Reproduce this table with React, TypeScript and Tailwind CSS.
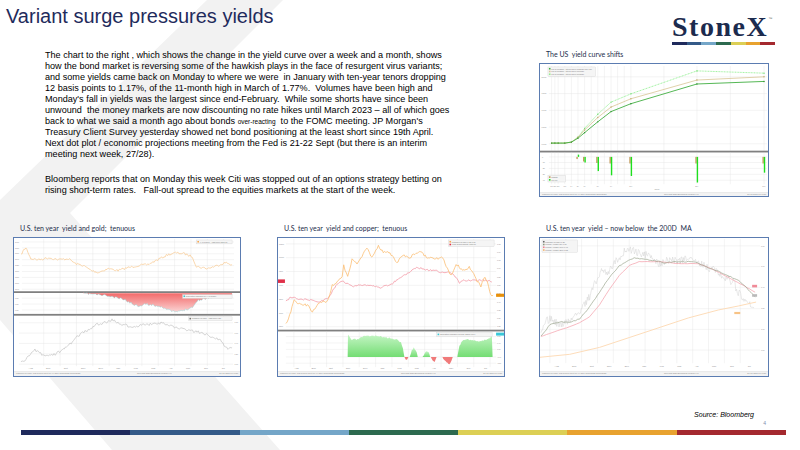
import React from "react";

type P = [number, number];

const BAR = [
  "bg-[#1f2a5c]",
  "bg-[#345a88]",
  "bg-[#74a6c8]",
  "bg-[#2d6a4f]",
  "bg-[#dccf55]",
  "bg-[#e8a22f]",
  "bg-[#a4292f]",
];

function rng(seed: number) {
  let s = seed;
  return () => {
    s = (s * 16807) % 2147483647;
    return (s - 1) / 2147483646;
  };
}

// interpolate between key points and add a bit of noise so it looks like market data
function walk(keys: P[], step: number, amp: number, seed: number): P[] {
  const r = rng(seed);
  const out: P[] = [];
  for (let i = 0; i < keys.length - 1; i++) {
    const [x0, y0] = keys[i];
    const [x1, y1] = keys[i + 1];
    const n = Math.max(1, Math.round((x1 - x0) / step));
    for (let j = 0; j < n; j++) {
      const t = j / n;
      out.push([x0 + (x1 - x0) * t, y0 + (y1 - y0) * t + (r() - 0.5) * amp]);
    }
  }
  out.push(keys[keys.length - 1]);
  return out;
}

const line = (p: P[]) => "M" + p.map(([x, y]) => `${x.toFixed(1)} ${y.toFixed(1)}`).join("L");
const area = (p: P[], base: number) =>
  line(p) + `L${p[p.length - 1][0]} ${base}L${p[0][0]} ${base}Z`;
const range = (a: number, b: number, s: number) =>
  Array.from({ length: Math.floor((b - a) / s) + 1 }, (_, i) => a + i * s);

function Tiny({ x, y, t, anchor = "start", fill = "#8a8a8a", size = 2.4 }: {
  x: number; y: number; t: string; anchor?: "start" | "end" | "middle"; fill?: string; size?: number;
}) {
  return (
    <text x={x} y={y} fontSize={size} fill={fill} textAnchor={anchor} fontFamily="Liberation Sans, sans-serif">
      {t}
    </text>
  );
}

function Grid({ xs, ys, x0, x1, y0, y1 }: { xs: number[]; ys: number[]; x0: number; x1: number; y0: number; y1: number }) {
  return (
    <g stroke="#e3e3e3" strokeWidth={0.4}>
      {xs.map((x) => <line key={"v" + x} x1={x} x2={x} y1={y0} y2={y1} />)}
      {ys.map((y) => <line key={"h" + y} x1={x0} x2={x1} y1={y} y2={y} />)}
    </g>
  );
}

const MONTHS = ["Aug", "Sep", "Oct", "Nov", "Dec", "Jan", "Feb", "Mar", "Apr", "May", "Jun", "Jul"];

function XAxis({ x0, x1, y }: { x0: number; x1: number; y: number }) {
  const step = (x1 - x0) / MONTHS.length;
  return (
    <g>
      {MONTHS.map((m, i) => (
        <Tiny key={m} x={x0 + step * (i + 0.5)} y={y} t={m} anchor="middle" />
      ))}
    </g>
  );
}

function Foot({ w, y }: { w: number; y: number }) {
  return (
    <g>
      <rect x={0} y={y} width={w} height={140} fill="#f3f3f3" />
      <line x1={0} x2={w} y1={y} y2={y} stroke="#cfcfcf" strokeWidth={0.4} />
      <Tiny x={2} y={y + 2.8} t="USGG10YR Index (US Generic Govt 10 Yr) Daily 20JUL2020-20JUL2021" size={2} />
      <Tiny x={w / 2 + 10} y={y + 2.8} t="Copyright 2021 Bloomberg Finance L.P." size={2} />
      <Tiny x={w - 2} y={y + 2.8} t="20-Jul-2021 10:40:38" anchor="end" size={2} />
    </g>
  );
}

function Legend({ x, y, w, rows }: { x: number; y: number; w: number; rows: { c: string; t: string }[] }) {
  return (
    <g>
      <rect x={x} y={y} width={w} height={rows.length * 2.8 + 1.2} fill="#f5f5f5" stroke="#c8c8c8" strokeWidth={0.3} />
      {rows.map((r, i) => (
        <g key={i}>
          <rect x={x + 1} y={y + 1 + i * 2.8} width={1.6} height={1.6} fill={r.c} />
          <Tiny x={x + 3.4} y={y + 2.6 + i * 2.8} t={r.t} size={1.9} fill="#777" />
        </g>
      ))}
    </g>
  );
}

function Sep({ y, w }: { y: number; w: number }) {
  return <rect x={0} y={y} width={w} height={1.8} fill="#808080" />;
}

function YieldCurveChart() {
  const xs = [11.7, 15, 18.3, 25, 31.7, 38.3, 45, 58.3, 71.7, 91.7, 158.3, 226];
  const dark = [80.3, 80.3, 80.3, 80.3, 79.3, 75.3, 69.7, 58.7, 48.3, 40.3, 20.3, 17.7];
  const tan = [80.3, 80.3, 80.3, 80.3, 79.3, 74.3, 67, 54.3, 43.7, 35.3, 16.3, 13];
  const light = [80.3, 80.3, 80.3, 80.3, 79.3, 74.3, 65.3, 51, 38.7, 30.3, 7, 9.3];
  const pts = (ys: number[]) => xs.map((x, i) => `${x},${ys[i]}`).join(" ");
  const bars: [number, number, number][] = [
    [38.3, 96.5, 92], [45, 99, 100], [58.3, 100.5, 108.7],
    [71.7, 101, 113], [91.7, 101, 113.7], [158.3, 101, 120.3], [226, 101, 110.3],
  ];
  const labels = ["1M", "2M", "3M", "6M", "1Y", "2Y", "3Y", "5Y", "7Y", "10Y", "20Y", "30Y"];
  const vgrid = [11.7, 15, 18.3, 25, 31.7, 38.3, 45, 51.7, 58.3, 65, 71.7, 78.3, 85, 91.7, 125, 158.3, 192, 226];
  return (
    <svg viewBox="0 0 230 134" preserveAspectRatio="none" className="block w-full h-full">
      <Grid xs={vgrid} ys={[13, 30, 47, 64, 81]} x0={9} x1={229} y0={2} y1={88} />
      {["2.000", "1.500", "1.000", "0.500", "0.000"].map((t, i) => (
        <Tiny key={t} x={1.5} y={[13, 30, 47, 64, 81][i] + 0.8} t={t} size={2} />
      ))}
      <Legend x={8} y={3} w={48} rows={[
        { c: "#3fae3f", t: "US 10 Treasury Actives Curve 07/20/21 Mid YTM" },
        { c: "#d8c79b", t: "US 10 Treasury Actives Curve 07/13/21" },
        { c: "#8ff08f", t: "US 10 Treasury Actives Curve 06/18/21" },
      ]} />
      <polyline points={pts(light)} fill="none" stroke="#86ee86" strokeWidth={0.8} strokeDasharray="1 0.6" />
      <polyline points={pts(tan)} fill="none" stroke="#d8c595" strokeWidth={0.8} />
      <polyline points={pts(dark)} fill="none" stroke="#3fae3f" strokeWidth={0.9} />
      {xs.map((x, i) => (
        <g key={x}>
          <circle cx={x} cy={light[i]} r={0.7} fill="#6fdc6f" />
          <circle cx={x} cy={tan[i]} r={0.7} fill="#c2ab6f" />
          <circle cx={x} cy={dark[i]} r={0.7} fill="#2a8f2a" />
        </g>
      ))}
      <Sep y={88} w={230} />
      <Grid xs={vgrid} ys={[94.3, 100, 106, 112, 118]} x0={9} x1={229} y0={90} y1={122} />
      {["0", "-10", "-20", "-30", "-40"].map((t, i) => (
        <Tiny key={t} x={2} y={[94.3, 100, 106, 112, 118][i] + 0.8} t={t} size={2} />
      ))}
      {bars.map(([x, t, g]) => (
        <g key={x}>
          <rect x={x - 1.6} y={Math.min(94.3, t)} width={1.4} height={Math.abs(t - 94.3)} fill="#c29b5c" />
          <rect x={x - 0.2} y={Math.min(94.3, g)} width={1.4} height={Math.abs(g - 94.3)} fill="#1ee01e" />
        </g>
      ))}
      <Legend x={8} y={113} w={18} rows={[{ c: "#c29b5c", t: "Change" }, { c: "#1ee01e", t: "1W 1M" }]} />
      {xs.map((x, i) => <Tiny key={"l" + x} x={x} y={125} t={labels[i]} anchor="middle" size={1.9} />)}
      <Tiny x={118} y={128.3} t="Tenor" anchor="middle" size={2} />
      <Foot w={230} y={130.5} />
    </svg>
  );
}

function GoldChart() {
  const gold = walk([[7, 17], [10, 12], [12, 10], [14, 14], [17, 21], [25, 22], [35, 20], [45, 22], [55, 21], [62, 26], [70, 28], [78, 33], [85, 35], [95, 31], [105, 33], [115, 30], [125, 28], [135, 27], [145, 22], [155, 17], [163, 15], [172, 16], [180, 19], [184, 29], [195, 31], [205, 28], [213, 25], [220, 27]], 1.2, 2.2, 7);
  const spread = walk([[70, 56], [80, 57], [90, 58], [100, 60], [110, 62], [118, 66], [125, 69], [132, 67], [140, 68], [150, 70], [158, 74], [165, 75], [172, 73], [180, 70], [186, 63], [195, 61], [205, 59], [213, 60], [220, 58]], 1.2, 2, 11);
  const yld = walk([[7, 127], [12, 124], [20, 113], [28, 118], [37, 120], [45, 116], [53, 110], [60, 104], [67, 97], [75, 93], [83, 88], [92, 86], [100, 83], [110, 88], [120, 91], [130, 88], [140, 87], [147, 86], [157, 89], [167, 91], [180, 94], [193, 97], [200, 100], [207, 103], [212, 109], [217, 113], [220, 111]], 1.2, 3, 23);
  const vx = range(30, 215, 16.5);
  const redArea = "M70 56" + spread.map(([x, y]) => `L${x.toFixed(1)} ${y.toFixed(1)}`).join("") + "L220 56Z";
  return (
    <svg viewBox="0 0 228 140" preserveAspectRatio="none" className="block w-full h-full">
      <defs>
        <linearGradient id="gRed" x1="0" y1="0" x2="0" y2="1">
          <stop offset="0" stopColor="#f26464" />
          <stop offset="1" stopColor="#fbd3d3" />
        </linearGradient>
      </defs>
      <Grid xs={vx} ys={range(4, 52, 6)} x0={8} x1={222} y0={1} y1={54} />
      {range(4, 52, 6).map((y, i) => <Tiny key={y} x={1} y={y + 0.7} t={`${1900 - i * 20}`} size={1.8} />)}
      <Legend x={184} y={2} w={36} rows={[{ c: "#f6a54e", t: "XAU Curncy - Last Price 1813.00" }]} />
      <path d={line(gold)} fill="none" stroke="#f9cd9a" strokeWidth={0.8} />
      <Sep y={54} w={228} />
      <Grid xs={vx} ys={[61, 67, 73]} x0={8} x1={222} y0={56} y1={77} />
      {[61, 67, 73].map((y) => <Tiny key={y} x={1} y={y + 0.7} t="0.50" size={1.8} />)}
      <path d={redArea} fill="url(#gRed)" />
      <path d={line(spread)} fill="none" stroke="#7fd0d4" strokeWidth={0.4} />
      <Legend x={170} y={57.3} w={50} rows={[{ c: "#39c6d4", t: "Correlation USGG10YR XAU Curncy" }]} />
      <Sep y={77} w={228} />
      <Grid xs={vx} ys={range(86, 128, 10.5)} x0={5} x1={221} y0={79} y1={130} />
      {range(86, 128, 10.5).map((y, i) => <Tiny key={y} x={222.5} y={y + 0.7} t={`${(1.8 - i * 0.2).toFixed(2)}`} size={1.8} />)}
      <Legend x={176} y={80} w={44} rows={[{ c: "#777", t: "USGG10YR Index - Last Price 1.20" }]} />
      <path d={line(yld)} fill="none" stroke="#c2c2c2" strokeWidth={0.7} />
      <XAxis x0={8} x1={220} y={132.6} />
      <Foot w={228} y={135.5} />
    </svg>
  );
}

function CopperChart() {
  const orange = walk([[8, 88], [13, 74.7], [16.3, 63], [23, 68], [29.7, 68], [34.7, 74.7], [43, 64.7], [49.7, 64.7], [54.7, 48], [59.7, 44.7], [64.7, 39.7], [66.3, 28], [70.3, 39.7], [74.7, 21.3], [79.7, 26.3], [89.7, 9.7], [94.7, 19.7], [101.3, 8], [106.3, 14.7], [113, 14.7], [119.7, 24.7], [126.3, 18], [133, 19.7], [143, 13], [149.7, 19.7], [156.3, 21.3], [166.3, 19.7], [169.7, 28], [174.7, 38], [179.7, 26.3], [186.3, 33], [193, 29.7], [199.7, 41.3], [204.7, 49.7], [208, 39.7], [211.3, 44.7], [214.7, 58], [217, 58]], 1.2, 2.6, 5);
  const pink = walk([[8, 64.7], [13, 59.7], [19.7, 62], [33, 63], [43, 64.7], [51.3, 59.7], [59.7, 46.3], [64.7, 43], [69.7, 46.3], [76.3, 49.7], [83, 47.3], [93, 48], [103, 50.3], [113, 47.3], [119.7, 43], [126.3, 38], [133, 34.7], [139.7, 29.7], [146.3, 31.3], [153, 33], [159.7, 33], [166.3, 35.3], [173, 34.7], [179.7, 39.7], [183, 46.3], [186.3, 43], [196.3, 43], [206.3, 43], [213, 43], [215.7, 44.7]], 1.2, 1.8, 9);
  const base = 120.7;
  const g1 = walk([[70.3, base], [70.6, 98], [74, 103], [80, 103], [86, 100], [95, 99], [105, 100], [115, 102], [120, 103], [124, 106], [126, 112], [127.5, base]], 1, 1.5, 3);
  const g2 = walk([[133, base], [135, 114], [137, 111.3], [140, 116], [141, base]], 1, 1, 4);
  const g3 = walk([[146, base], [149, 115], [152, 116], [153.5, base]], 1, 1, 6);
  const g4 = walk([[181, base], [183, 110], [186, 104], [190, 103], [196, 104], [202, 105], [207, 104], [211, 103], [214, 102], [215.7, 97], [216.5, base]], 1, 1.5, 8);
  const r1 = walk([[127.5, base], [129, 123.7], [130.5, 123], [131.5, base]], 1, 0.5, 12);
  const r2 = walk([[154, base], [156, 124], [158, 125.3], [160, base]], 1, 1, 13);
  const r3 = walk([[165.7, base], [168, 124], [171, 127], [173, 128], [175, 125], [176.3, base]], 1, 1, 14);
  const vx = range(16, 216, 16.5);
  return (
    <svg viewBox="0 0 228 140" preserveAspectRatio="none" className="block w-full h-full">
      <defs>
        <linearGradient id="gGreen" x1="0" y1="0" x2="0" y2="1">
          <stop offset="0" stopColor="#c4f5c4" />
          <stop offset="1" stopColor="#74dd74" />
        </linearGradient>
      </defs>
      <Grid xs={vx} ys={range(6, 90, 14)} x0={8} x1={220} y0={1} y1={93} />
      {range(6, 90, 14).map((y, i) => <Tiny key={y} x={1} y={y + 0.7} t={`${10500 - i * 500}`} size={1.8} />)}
      {range(6, 90, 8.4).map((y, i) => <Tiny key={y} x={221} y={y + 0.7} t={`${(1.75 - i * 0.05).toFixed(2)}`} size={1.8} />)}
      <Legend x={172} y={2} w={46} rows={[
        { c: "#f6a54e", t: "USGG10YR Index  1.20  1.18" },
        { c: "#e4304c", t: "LMCADS03 Comdty  9379.00" },
      ]} />
      <path d={line(pink)} fill="none" stroke="#f39aa6" strokeWidth={0.8} />
      <path d={line(orange)} fill="none" stroke="#fbbd72" strokeWidth={0.8} />
      <rect x={0} y={42} width={7} height={3.6} fill="#e0304a" />
      <rect x={220} y={56.5} width={8} height={3.2} fill="#e8900a" />
      <Sep y={93} w={228} />
      <Grid xs={vx} ys={[100, 106.5, 113, 120.7, 127]} x0={8} x1={220} y0={95} y1={131} />
      {[100, 106.5, 113, 120.7, 127].map((y, i) => <Tiny key={y} x={221} y={y + 0.7} t={`${(0.8 - i * 0.4).toFixed(2)}`} size={1.8} />)}
      {[g1, g2, g3, g4].map((g, i) => <path key={i} d={area(g, base)} fill="url(#gGreen)" />)}
      {[r1, r2, r3].map((g, i) => <path key={"r" + i} d={area(g, base)} fill="#f07a7a" />)}
      <rect x={220} y={96} width={8} height={3} fill="#38c8d8" />
      <Legend x={160} y={96} w={56} rows={[{ c: "#38c8d8", t: "Correlation USGG10YR LMCADS03 0.844" }]} />
      <XAxis x0={10} x1={218} y={133.2} />
      <Foot w={228} y={135.5} />
    </svg>
  );
}

function MaChart() {
  const price = walk([[1, 100], [5, 85], [10, 82], [20, 88], [30, 84], [40, 75], [50, 60], [55, 45], [60, 40], [62, 30], [68, 35], [75, 25], [80, 20], [85, 14], [92, 12], [100, 16], [110, 18], [120, 26], [130, 22], [140, 24], [150, 20], [160, 24], [170, 30], [180, 35], [190, 42], [195, 45], [200, 55], [205, 60], [210, 65], [214, 73], [216, 70]], 0.8, 8, 31);
  const ma50 = walk([[1, 100], [10, 88], [20, 85], [30, 86], [40, 82], [50, 70], [60, 55], [70, 40], [80, 28], [95, 20], [110, 22], [125, 25], [140, 24], [155, 24], [170, 30], [185, 36], [200, 43], [210, 52], [217, 60]], 2, 1, 2);
  const ma100 = walk([[1, 100], [15, 95], [30, 90], [40, 86], [50, 80], [60, 68], [70, 52], [80, 38], [90, 28], [100, 24], [120, 24], [140, 26], [160, 26], [175, 32], [190, 40], [205, 48], [217, 55]], 3, 0.3, 3);
  const ma200: P[] = [[0, 121], [30, 118], [60, 111], [90, 101], [120, 91], [150, 81], [180, 73], [200, 69], [218, 65]];
  const hy = [8, 29, 50, 71.7, 92.7, 113.7];
  return (
    <svg viewBox="0 0 230 140" preserveAspectRatio="none" className="block w-full h-full">
      <Grid xs={range(10, 215, 16)} ys={hy} x0={0} x1={222} y0={1} y1={127} />
      {hy.map((y, i) => <Tiny key={y} x={223} y={y + 0.7} t={`${(1.8 - i * 0.2).toFixed(2)}`} size={1.8} />)}
      <Legend x={2} y={2} w={36} rows={[
        { c: "#666", t: "USGG10YR Index  1.20" },
        { c: "#8e9a80", t: "Moving Average (50) 1.39" },
        { c: "#f08090", t: "Moving Average (100) 1.48" },
        { c: "#f6b46a", t: "Moving Average (200) 1.22" },
      ]} />
      <path d={line(price)} fill="none" stroke="#d2d2d2" strokeWidth={0.5} />
      <path d={line(ma200)} fill="none" stroke="#fddcb8" strokeWidth={1} />
      <path d={line(ma100)} fill="none" stroke="#f5a8b1" strokeWidth={0.8} />
      <path d={line(ma50)} fill="none" stroke="#9ba58e" strokeWidth={0.7} />
      <rect x={214} y={47.5} width={5} height={2.6} fill="#f08a98" />
      <rect x={214} y={57} width={5} height={2.6} fill="#b9b9b9" />
      <rect x={196} y={75} width={6} height={2.2} fill="#f7c386" />
      <XAxis x0={8} x1={220} y={131} />
      <Foot w={230} y={135.5} />
    </svg>
  );
}

function ChartCard({ title, w, h, children, cls = "" }: { title: string; w: string; h: string; children: React.ReactNode; cls?: string }) {
  return (
    <div className={`${w} ${cls} flex flex-col`}>
      <div className="h-[17px] flex items-center pl-[7px] font-['Lato'] text-[7px] text-[#232d4b] whitespace-pre">{title}</div>
      <div className={`${h} border-[1.5px] border-[#5b7cb1] bg-white overflow-hidden`}>{children}</div>
    </div>
  );
}

export default function App() {
  return (
    <div className="relative w-[800px] h-[450px] overflow-hidden bg-white font-['Liberation_Sans',Arial,sans-serif]">
      <svg className="absolute inset-0" width="800" height="450" viewBox="0 0 800 450">
        <polygon points="207,0 283,0 70,213 280,450 112,450 0,320 0,200" fill="#f2f2f2" />
      </svg>

      <div className="relative flex flex-col h-full">
        <header className="h-[46px] flex justify-between items-start">
          <h1 className="pl-[6px] pt-[3px] text-[20px] leading-[26px] text-[#1f2b5c] whitespace-pre">Variant surge pressures yields</h1>
          <div className="pt-[13px] pr-[25px] flex flex-col items-start">
            <div className="flex items-start">
              <span className="font-['Liberation_Serif',serif] font-bold text-[28px] leading-none tracking-[1.5px] text-[#1c2b4e]">StoneX</span>
              <span className="text-[4px] leading-none mt-[4px] text-[#666]">™</span>
            </div>
            <div className="flex w-[103px] h-[3px] mt-[1px]">
              {BAR.map((c) => <div key={c} className={`flex-1 ${c}`} />)}
            </div>
          </div>
        </header>

        <section className="flex h-[151px]">
          <div className="ml-[45px] mt-[4px] text-[9.1px] leading-[11px] text-black whitespace-pre">
            <p>
              The chart to the right , which shows the change in the yield curve over a week and a month, shows{"\n"}
              how the bond market is reversing some of the hawkish plays in the face of resurgent virus variants;{"\n"}
              and some yields came back on Monday to where we were  in January with ten-year tenors dropping{"\n"}
              12 basis points to 1.17%, of the 11-month high in March of 1.77%.  Volumes have been high and{"\n"}
              Monday's fall in yields was the largest since end-February.  While some shorts have since been{"\n"}
              unwound  the money markets are now discounting no rate hikes until March 2023 – all of which goes{"\n"}
              back to what we said a month ago about bonds <span className="text-[6.5px]">over-reacting</span>  to the FOMC meeting. JP Morgan's{"\n"}
              Treasury Client Survey yesterday showed net bond positioning at the least short since 19th April.{"\n"}
              Next dot plot / economic projections meeting from the Fed is 21-22 Sept (but there is an interim{"\n"}
              meeting next week, 27/28).
            </p>
            <p className="mt-[14px]">
              Bloomberg reports that on Monday this week Citi was stopped out of an options strategy betting on{"\n"}
              rising short-term rates.   Fall-out spread to the equities markets at the start of the week.
            </p>
          </div>
          <ChartCard title="The US  yield curve shifts" w="w-[230px]" h="h-[134px]" cls="ml-auto mr-[31px]">
            <YieldCurveChart />
          </ChartCard>
        </section>

        <section className="flex mt-[23px] pl-[13px]">
          <ChartCard title="U.S. ten year  yield and gold;  tenuous" w="w-[228px]" h="h-[140px]">
            <GoldChart />
          </ChartCard>
          <ChartCard title="U.S. ten year  yield and copper;  tenuous" w="w-[228px]" h="h-[140px]" cls="ml-[36px]">
            <CopperChart />
          </ChartCard>
          <ChartCard title="U.S. ten year  yield – now below  the 200D  MA" w="w-[230px]" h="h-[140px]" cls="ml-[34px]">
            <MaChart />
          </ChartCard>
        </section>

        <div className="mt-[33px] h-[10px] flex justify-end pr-[46px] text-[7px] leading-[10px] italic text-black">Source: Bloomberg</div>
        <div className="h-[6px] flex justify-end pr-[34px] text-[5px] leading-[6px] text-[#7f8fae]">4</div>
        <div className="mt-[4px] ml-[21px] w-[765px] h-[5px] flex">
          {BAR.map((c) => <div key={c} className={`flex-1 ${c}`} />)}
        </div>
      </div>
    </div>
  );
}
